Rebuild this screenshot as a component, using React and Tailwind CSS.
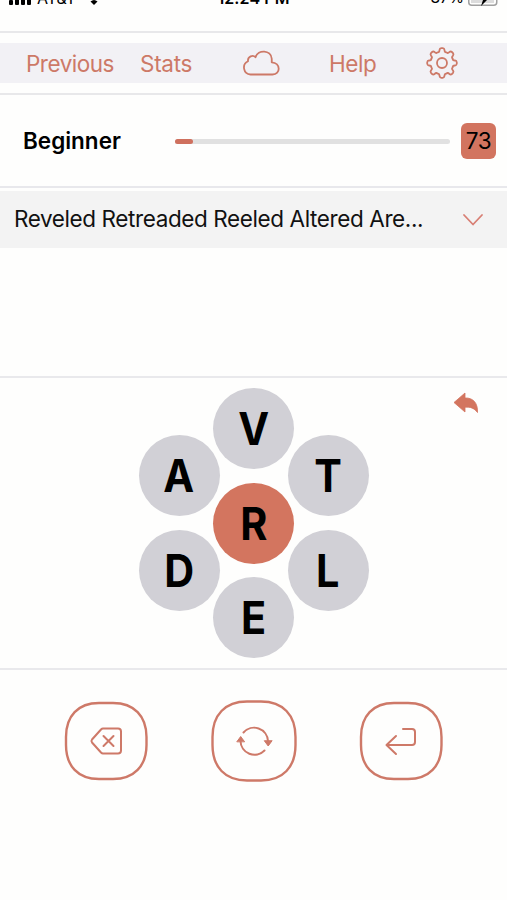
const columns = [
  ['A', 'D'],
  ['V', 'R', 'E'],
  ['T', 'L'],
];

const centerLetter = 'R';

// eight-tooth outline of the settings wheel, in a 32 unit box
const gearPath = (() => {
  const point = (deg, r) => {
    const a = (deg * Math.PI) / 180;
    return `${(16 + r * Math.sin(a)).toFixed(2)} ${(16 - r * Math.cos(a)).toFixed(2)}`;
  };
  let d = '';
  for (let i = 0; i < 8; i++) {
    const a = i * 45;
    d += `${i === 0 ? 'M' : 'L'}${point(a - 11, 13.2)}`;
    d += `Q${point(a - 9, 14.8)} ${point(a - 3, 14.8)}`;
    d += `L${point(a + 3, 14.8)}`;
    d += `Q${point(a + 9, 14.8)} ${point(a + 11, 13.2)}`;
    d += `Q${point(a + 14, 10.7)} ${point(a + 22.5, 11.6)}`;
    d += `Q${point(a + 31, 10.7)} ${point(a + 34, 13.2)}`;
  }
  return d + 'Z';
})();

const StatusBar = () => (
  <div className="h-[33px] shrink-0 overflow-hidden border-b-2 border-[#e8e8ea]">
    <div className="-mt-[10px] flex h-4 items-end justify-between pl-[9px] pr-[9px] text-[16px] leading-4 text-black">
      <div className="flex w-[190px] items-end">
        <div className="mb-px flex items-end gap-[2px]">
          <span className="h-[5px] w-1 rounded-[1px] bg-black" />
          <span className="h-[7px] w-1 rounded-[1px] bg-black" />
          <span className="h-[9px] w-1 rounded-[1px] bg-black" />
          <span className="h-[11px] w-1 rounded-[1px] bg-black" />
        </div>
        <span className="ml-[6px]">AT&amp;T</span>
        <svg viewBox="0 0 18 14" className="mb-px ml-[9px] h-3.5 w-[18px]">
          <path d="M9 14 5.500 10.500Q9 7.500 12.500 10.500Z" fill="black" />
          <path d="M3.500 7Q9 2 14.500 7M1 4Q9-3 17 4" fill="none" stroke="black" strokeWidth="2" />
        </svg>
      </div>
      <span className="whitespace-nowrap font-semibold tracking-[0.1px]">12:24 PM</span>
      <div className="flex w-[190px] items-end justify-end gap-[4px]">
        <span className="text-[15.5px]">87%</span>
        <svg viewBox="0 0 30 14" className="h-3.5 w-[30px]">
          <rect x="0.75" y="0.75" width="28" height="12.500" rx="3" fill="none" stroke="#a0a0a0" strokeWidth="1.500" />
          <path d="M3 3h23v8H3z" fill="#dcdcdc" />
          <path d="M18 1 11 8h4l-2 6 8-8h-4z" fill="black" />
        </svg>
      </div>
    </div>
  </div>
);

const Toolbar = () => (
  <div className="flex h-[62px] shrink-0 items-center border-b-2 border-[#e8e8ea]">
    <nav className="flex h-10 w-full items-center bg-[#f2f1f5] pl-[26px] text-[22.5px] text-[#cd7967]">
      <button className="w-[114px] pt-0.5 text-left tracking-[-0.5px]">Previous</button>
      <button className="w-[102px] pt-0.5 text-left tracking-[-0.3px]">Stats</button>
      <button className="w-[87px]">
        <svg viewBox="0 0 38 26" className="h-[26px] w-[38px]" fill="none" stroke="currentColor" strokeWidth="1.8" strokeLinejoin="round">
          <path d="M8.500 24.500A7 7 0 0 1 6 11.200C5.500 6.500 11 4.300 13.500 7.200C16-.800 29-.300 29.700 8.500C29.800 10 29.800 11 29.700 12.300C39 13 38.800 24.500 30.500 24.500Z" />
        </svg>
      </button>
      <button className="w-[97px] pt-0.5 text-left tracking-[-0.4px]">Help</button>
      <button>
        <svg viewBox="0 0 32 32" className="h-8 w-8" fill="none" stroke="currentColor" strokeWidth="1.8" strokeLinejoin="round">
          <path d={gearPath} />
          <circle cx="16" cy="16" r="5" />
        </svg>
      </button>
    </nav>
  </div>
);

const Progress = () => (
  <div className="flex h-[93px] shrink-0 items-center border-b-2 border-[#e8e8ec] pl-[23px] pr-[11px] text-black">
    <span className="w-[152px] text-[22.5px] font-semibold">Beginner</span>
    <div className="mt-0.5 h-[5px] flex-1 rounded-full bg-[#e1e1e1]">
      <div className="h-full w-[18px] rounded-full bg-[#cf705e]" />
    </div>
    <span className="ml-[11px] flex h-9 w-[35px] items-center justify-center rounded-md bg-[#d2745f] text-[22.5px] tracking-[-0.5px]">73</span>
  </div>
);

const FoundWords = () => (
  <div className="mt-[3px] flex h-[57px] shrink-0 items-center justify-between bg-[#f3f3f3] pl-[14px] pr-[23px]">
    <span className="pb-px whitespace-nowrap text-[22.5px] tracking-[-0.4px]">Reveled Retreaded Reeled Altered Are...</span>
    <svg viewBox="0 0 22 14" className="h-3.5 w-[22px]" fill="none" stroke="#d87f74" strokeWidth="1.8" strokeLinecap="round" strokeLinejoin="round">
      <path d="M2 2 11 11.500 20 2" />
    </svg>
  </div>
);

const Hive = () => (
  <div className="relative flex h-[294px] shrink-0 items-center justify-center border-y-2 border-[#e9e9ec]">
    {columns.map((letters) => (
      <div key={letters[0]} className="flex w-[74.500px] flex-col items-center gap-[13.500px]">
        {letters.map((letter) => (
          <button
            key={letter}
            className={`flex size-[81px] shrink-0 items-center justify-center rounded-full text-[45px] leading-none font-bold text-black ${
              letter === centerLetter ? 'bg-[#d3755f]' : 'bg-[#d1d0d6]'
            }`}
          >
            <span className="scale-x-[0.92]">{letter}</span>
          </button>
        ))}
      </div>
    ))}
    <svg viewBox="0 0 26 22" className="absolute top-[14px] right-[28px] h-[22px] w-[26px]" fill="#d3755f">
      <path d="M1 10.500 12 1V6C20 5.500 25 11 24.500 20.500C21 16 17.500 14.800 12 15.200V20Z" stroke="#d3755f" strokeWidth=".8" strokeLinejoin="round" />
    </svg>
  </div>
);

const Controls = () => (
  <div className="flex h-[142px] shrink-0 items-center text-[#ce7968]">
    <svg viewBox="0 0 84 80" className="ml-[64px] h-20 w-[84px]" fill="none" stroke="currentColor" strokeWidth="2.400" strokeLinecap="round" strokeLinejoin="round">
      <path d="M35 2H49C70 2 82.500 15 82.500 36V44C82.500 65 70 78 49 78H35C14 78 2 65 2 44V36C2 15 14 2 35 2Z" />
      <g strokeWidth="2">
        <path d="M39 27.500H54Q57 27.500 57 30.500V49.500Q57 52.500 54 52.500H39Q38 52.500 37 51.500L28 41.500Q26.800 40 28 38.500L37 28.500Q38 27.500 39 27.500Z" />
        <path d="m39.500 35 10 10m0-10-10 10" />
      </g>
    </svg>
    <svg viewBox="0 0 86 82" className="ml-[63px] h-[82px] w-[86px]" fill="none" stroke="currentColor" strokeWidth="2.400" strokeLinecap="round">
      <path d="M36 1.500H50C72 1.500 84.500 15 84.500 37V45C84.500 67 72 80.500 50 80.500H36C14 80.500 1.500 67 1.500 45V37C1.500 15 14 1.500 36 1.500Z" />
      <g strokeWidth="2">
        <path d="M32.500 32.500A14 14 0 0 1 57 41M53.500 50.500A14 14 0 0 1 29.500 41" />
        <path d="m53.500 41 3.700 5 3.700-5ZM26 41.500l3.700-5 3.700 5Z" fill="currentColor" strokeWidth="1" />
      </g>
    </svg>
    <svg viewBox="0 0 84 80" className="ml-[62px] h-20 w-[84px]" fill="none" stroke="currentColor" strokeWidth="2.400" strokeLinecap="round" strokeLinejoin="round">
      <path d="M35 2H49C70 2 82.500 15 82.500 36V44C82.500 65 70 78 49 78H35C14 78 2 65 2 44V36C2 15 14 2 35 2Z" />
      <g strokeWidth="2">
        <path d="M44 28H53Q56 28 56 31V41Q56 44 53 44H28" />
        <path d="m37 35-9.500 9 9.500 9" />
      </g>
    </svg>
  </div>
);

const App = () => (
  <div className="flex h-[900px] w-[507px] flex-col overflow-hidden bg-[#fefefd] font-['Inter','Liberation_Sans',sans-serif] text-[#111]">
    <StatusBar />
    <Toolbar />
    <Progress />
    <FoundWords />
    <div className="h-[128px] shrink-0" />
    <Hive />
    <Controls />
  </div>
);

export default App;
